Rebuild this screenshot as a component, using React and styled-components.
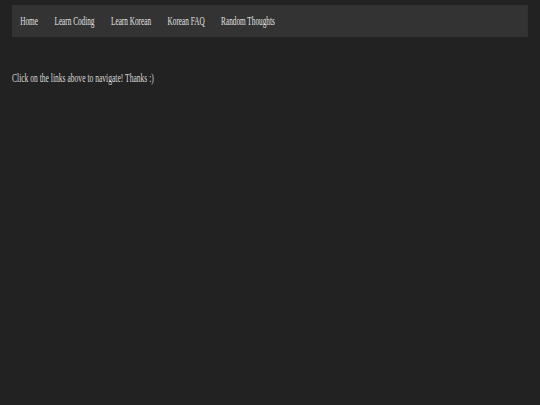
import styled, { createGlobalStyle } from 'styled-components';

// the reference type is narrow; the whole sheet is squeezed horizontally
const SQUEEZE = 0.63;

const GlobalStyle = createGlobalStyle`
  html, body {
    margin: 0;
    padding: 0;
    background-color: #222222;
    min-height: 100%;
  }
  body {
    height: 405px;
    overflow: hidden;
    font-family: "Liberation Serif", "Times New Roman", serif;
    color: #dcdcdc;
    -webkit-font-smoothing: antialiased;
  }
`;

const Sheet = styled.div`
  width: ${540 / SQUEEZE}px;
  padding-top: 5px;
  transform: scaleX(${SQUEEZE});
  transform-origin: 0 0;
`;

const NavBar = styled.nav`
  display: flex;
  align-items: center;
  height: 32px;
  margin-left: ${12 / SQUEEZE}px;
  width: ${516 / SQUEEZE}px;
  background-color: #333333;
`;

const NavLink = styled.a`
  padding: 0 ${8.25 / SQUEEZE}px;
  font-size: 11.5px;
  line-height: 32px;
  color: #e2e2e2;
  text-decoration: none;
  white-space: nowrap;
  cursor: pointer;
`;

const Message = styled.p`
  margin: 34px 0 0 ${12 / SQUEEZE}px;
  font-size: 12px;
  line-height: normal;
  color: #dadada;
`;

const links = ['Home', 'Learn Coding', 'Learn Korean', 'Korean FAQ', 'Random Thoughts'];

function App() {
  return (
    <>
      <GlobalStyle />
      <Sheet>
        <NavBar>
          {links.map((label) => (
            <NavLink key={label}>{label}</NavLink>
          ))}
        </NavBar>
        <Message>Click on the links above to navigate! Thanks :)</Message>
      </Sheet>
    </>
  );
}

export default App;
